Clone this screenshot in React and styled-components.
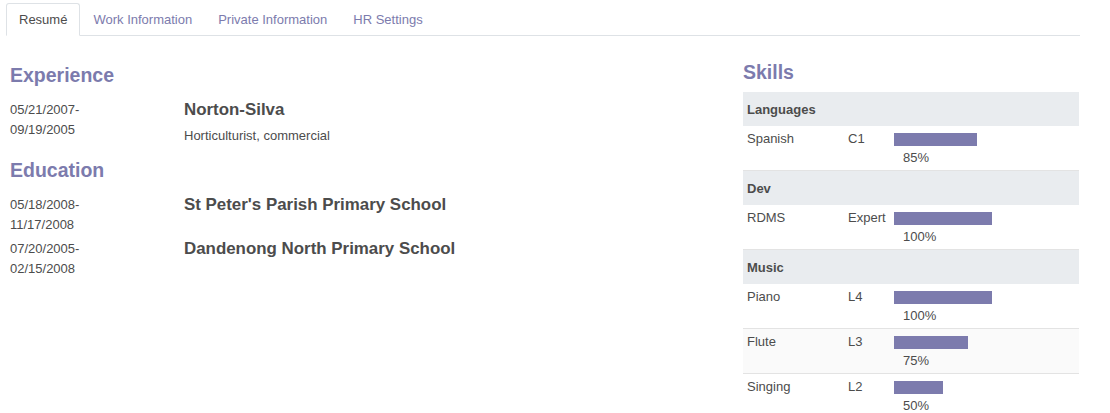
import React from 'react'
import styled, { createGlobalStyle } from 'styled-components'

const purple = '#7c7bad'
const text = '#4c4c4c'

const GlobalStyle = createGlobalStyle`
  body {
    margin: 0;
    background: #fff;
    font-family: "Liberation Sans", Arial, sans-serif;
    color: ${text};
    font-size: 13px;
  }
`

const experience = [
  { from: '05/21/2007-', to: '09/19/2005', title: 'Norton-Silva', desc: 'Horticulturist, commercial' }
]

const education = [
  { from: '05/18/2008-', to: '11/17/2008', title: "St Peter's Parish Primary School" },
  { from: '07/20/2005-', to: '02/15/2008', title: 'Dandenong North Primary School' }
]

const skills = [
  {
    group: 'Languages',
    items: [{ name: 'Spanish', level: 'C1', percent: 85 }]
  },
  {
    group: 'Dev',
    items: [{ name: 'RDMS', level: 'Expert', percent: 100 }]
  },
  {
    group: 'Music',
    items: [
      { name: 'Piano', level: 'L4', percent: 100 },
      { name: 'Flute', level: 'L3', percent: 75, shaded: true },
      { name: 'Singing', level: 'L2', percent: 50 }
    ]
  }
]

const tabs = ['Resumé', 'Work Information', 'Private Information', 'HR Settings']

const ResumeEntry = ({ entry }) => (
  <Entry>
    <Dates>
      {entry.from}
      <br />
      {entry.to}
    </Dates>
    <div>
      <EntryTitle>{entry.title}</EntryTitle>
      {entry.desc && <EntryDesc>{entry.desc}</EntryDesc>}
    </div>
  </Entry>
)

const App = () => {
  return (
    <>
      <GlobalStyle />
      <Page>
        <TabBar>
          {tabs.map((t, i) => (
            <Tab key={t} active={i === 0}>
              {t}
            </Tab>
          ))}
        </TabBar>

        <Body>
          <Resume>
            <Heading>Experience</Heading>
            {experience.map(e => (
              <ResumeEntry key={e.title} entry={e} />
            ))}

            <Heading spaced>Education</Heading>
            {education.map(e => (
              <ResumeEntry key={e.title} entry={e} />
            ))}
          </Resume>

          <Skills>
            <SkillsHeading>Skills</SkillsHeading>
            <SkillTable>
              {skills.map(g => (
                <React.Fragment key={g.group}>
                  <GroupRow>{g.group}</GroupRow>
                  {g.items.map(s => (
                    <SkillRow key={s.name} shaded={s.shaded}>
                      <span>{s.name}</span>
                      <span>{s.level}</span>
                      <Progress>
                        <BarTrack>
                          <Bar style={{ width: `${s.percent}%` }} />
                        </BarTrack>
                        <Percent>{s.percent}%</Percent>
                      </Progress>
                    </SkillRow>
                  ))}
                </React.Fragment>
              ))}
            </SkillTable>
          </Skills>
        </Body>
      </Page>
    </>
  )
}

export default App

const Page = styled.div`
  width: 1110px;
  height: 413px;
  overflow: hidden;
`

const TabBar = styled.div`
  display: flex;
  margin: 3px 30px 0 6px;
  border-bottom: 1px solid #dee2e6;
  height: 32px;
`

const Tab = styled.div`
  display: flex;
  align-items: center;
  padding: 0 12px;
  height: 33px;
  margin-bottom: -1px;
  font-size: 13px;
  color: ${props => (props.active ? text : purple)};
  background: ${props => (props.active ? '#fff' : 'transparent')};
  border: 1px solid ${props => (props.active ? '#dee2e6' : 'transparent')};
  border-bottom-color: ${props => (props.active ? '#fff' : 'transparent')};
  border-radius: 3px 3px 0 0;
  box-sizing: border-box;
`

const Body = styled.div`
  display: grid;
  grid-template-columns: 1fr 336px;
  gap: 23px;
  padding: 0 31px 0 10px;
`

const Resume = styled.div`
  padding-top: 27px;
`

const Heading = styled.div`
  font-size: 19.5px;
  font-weight: bold;
  color: ${purple};
  line-height: 24px;
  margin-top: ${props => (props.spaced ? '12px' : '0')};
  margin-bottom: 13px;
`

const Entry = styled.div`
  display: grid;
  grid-template-columns: 174px 1fr;
  min-height: 44px;
`

const Dates = styled.div`
  font-size: 13px;
  line-height: 20px;
`

const EntryTitle = styled.div`
  font-size: 16.9px;
  font-weight: bold;
  line-height: 20px;
`

const EntryDesc = styled.div`
  font-size: 13px;
  line-height: 20px;
  margin-top: 6px;
`

const Skills = styled.div`
  padding-top: 24px;
`

const SkillsHeading = styled(Heading)`
  margin-bottom: 8px;
`

const SkillTable = styled.div`
  display: flex;
  flex-direction: column;
`

const GroupRow = styled.div`
  height: 34px;
  display: flex;
  align-items: center;
  padding: 0 4px;
  background: #e9ecef;
  font-weight: bold;
  font-size: 13px;
`

const SkillRow = styled.div`
  display: grid;
  grid-template-columns: 101px 46px 1fr;
  height: 45px;
  box-sizing: border-box;
  padding: 5px 4px 0;
  line-height: 15px;
  background: ${props => (props.shaded ? '#fafafa' : '#fff')};
  border-bottom: 1px solid #e3e3e3;

  &:last-child {
    border-bottom: none;
  }
`

const Progress = styled.div`
  display: flex;
  flex-direction: column;
`

const BarTrack = styled.div`
  width: 98px;
  height: 13px;
  margin-top: 2px;
`

const Bar = styled.div`
  height: 100%;
  background: ${purple};
`

const Percent = styled.div`
  padding-left: 9px;
  margin-top: 4px;
`
